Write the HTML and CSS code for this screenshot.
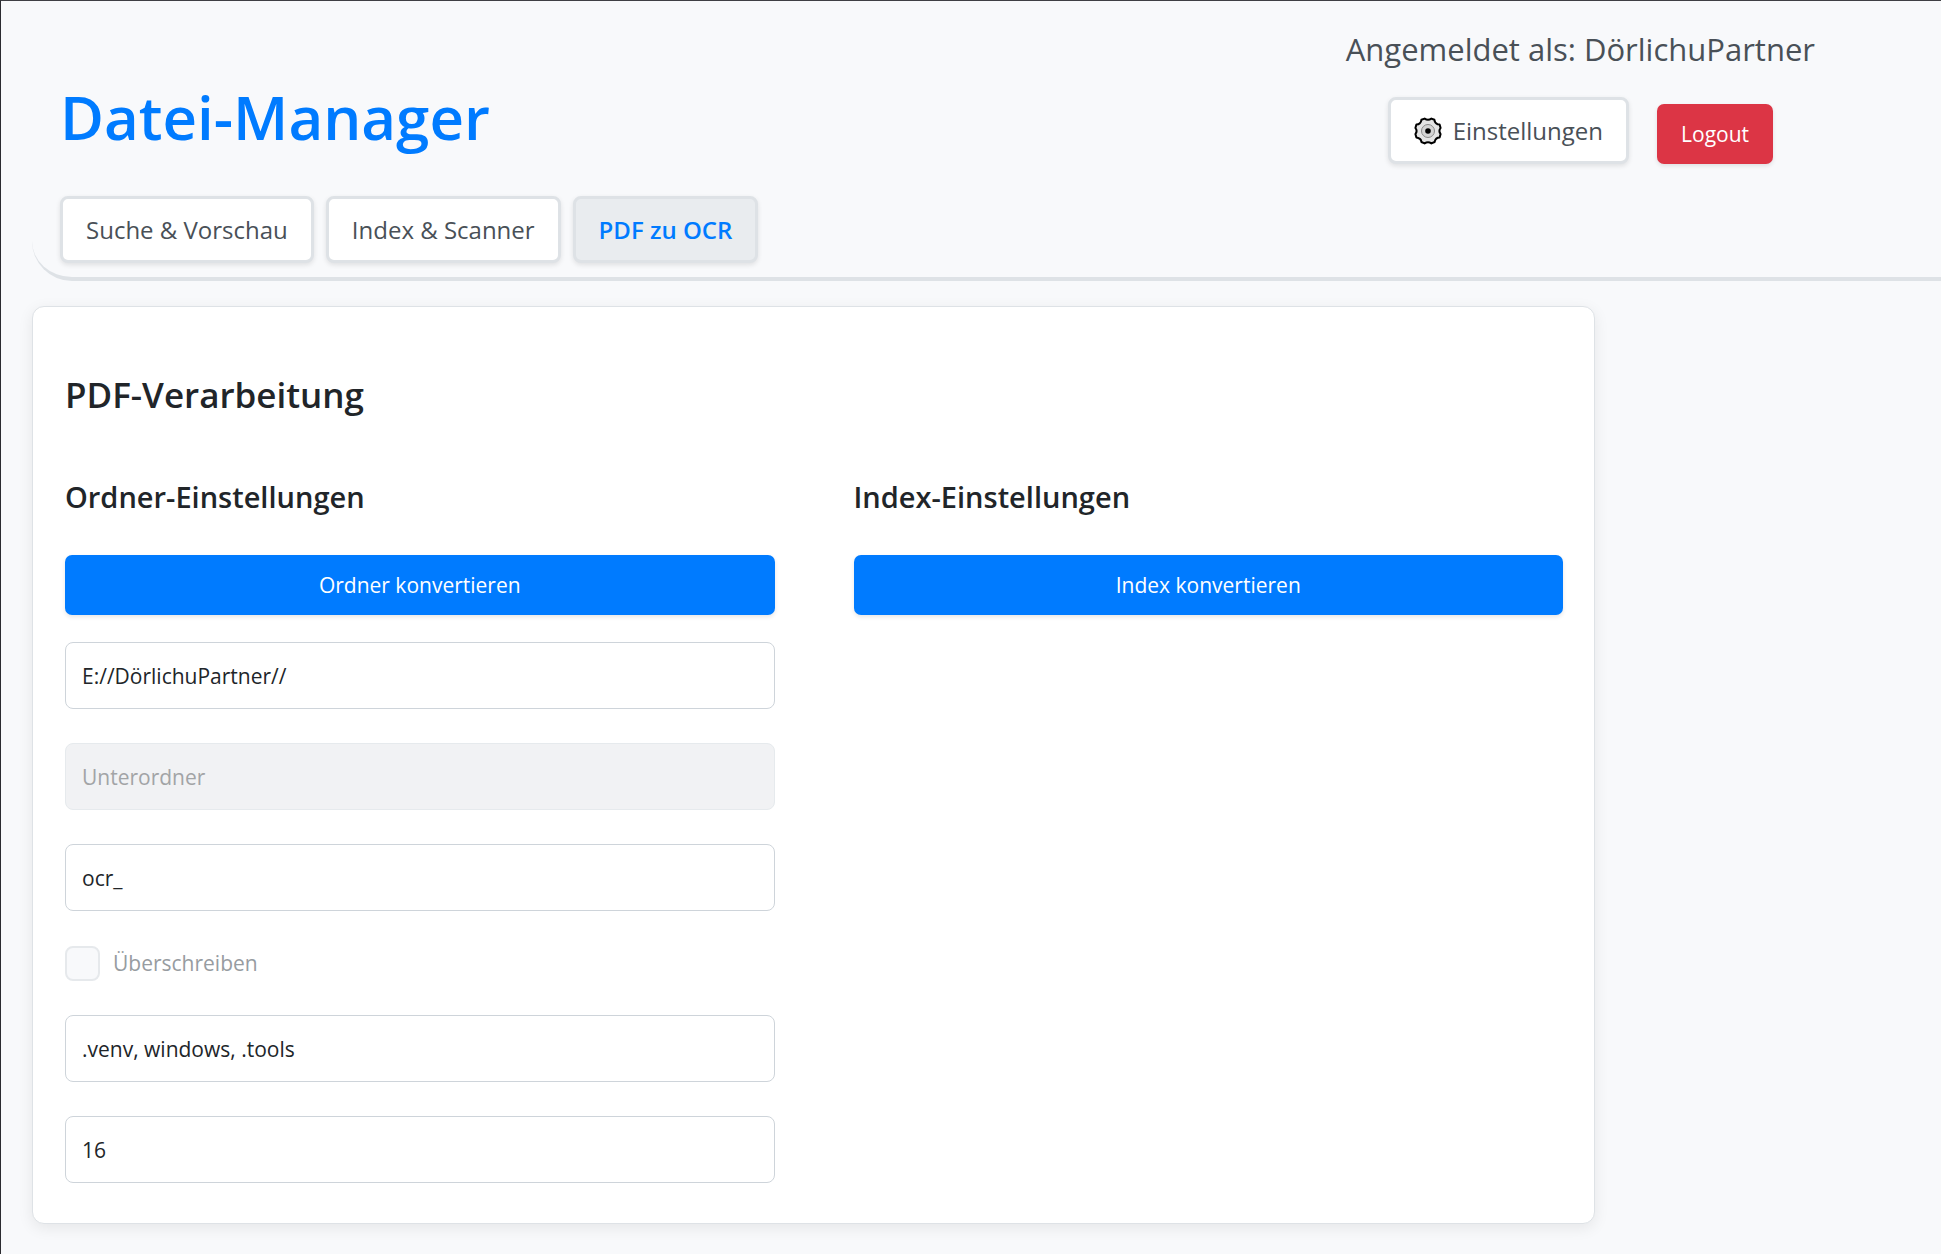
FILE: index.html
```
<!DOCTYPE html>
<html lang="de">
<head>
<meta charset="utf-8">
<meta name="viewport" content="width=device-width, initial-scale=1">
<title>Datei-Manager</title>
<link rel="stylesheet" href="styles.css">
</head>
<body>
<header class="header">
  <div class="brand">
    <h1 class="title">Datei-Manager</h1>
    <nav class="tabs">
      <button class="tab" type="button">Suche &amp; Vorschau</button>
      <button class="tab" type="button">Index &amp; Scanner</button>
      <button class="tab tab-active" type="button">PDF zu OCR</button>
    </nav>
  </div>
  <div class="user">
    <p class="user-name">Angemeldet als: DörlichuPartner</p>
    <div class="user-actions">
      <button class="tab settings" type="button">
        <svg class="gear" viewBox="0 0 28 28" aria-hidden="true">
          <path d="M10.6 1.6Q14 4 17.4 1.6L20.4 2.8Q20.6 6.2 23.6 7.2L25.6 7.4L26.6 11Q24.2 14 26.6 17L25.6 20.6Q21.6 20.6 20.6 25L17.4 26.4Q14 24 10.6 26.4L7.4 25Q7.2 21.4 2.4 20.6L1.4 17Q3.8 14 1.4 11L2.4 7.4Q6.8 7.4 7.4 2.8Z" fill="#e4e4e4" stroke="#000" stroke-width="2" stroke-linejoin="round"/>
          <circle cx="14" cy="14" r="6.5" fill="#d4d4d4" stroke="#8a8a8a" stroke-width="1"/>
          <circle cx="14" cy="14" r="2.8" fill="#000"/>
        </svg>
        <span>Einstellungen</span>
      </button>
      <button class="button logout" type="button">Logout</button>
    </div>
  </div>
</header>
<main class="card">
  <h2 class="card-title">PDF-Verarbeitung</h2>
  <div class="columns">
    <section class="column">
      <h3 class="section-title">Ordner-Einstellungen</h3>
      <button class="button" type="button">Ordner konvertieren</button>
      <form class="fields">
        <input class="field" type="text" aria-label="Ordnerpfad" value="E://DörlichuPartner//">
        <input class="field" type="text" aria-label="Unterordner" placeholder="Unterordner" disabled>
        <input class="field" type="text" aria-label="Präfix" value="ocr_">
        <label class="check"><input class="check-box" type="checkbox" disabled><span>Überschreiben</span></label>
        <input class="field" type="text" aria-label="Ausgeschlossene Ordner" value=".venv, windows, .tools">
        <input class="field" type="text" aria-label="Anzahl Prozesse" value="16">
      </form>
    </section>
    <section class="column">
      <h3 class="section-title">Index-Einstellungen</h3>
      <button class="button" type="button">Index konvertieren</button>
    </section>
  </div>
</main>
</body>
</html>
```
FILE: styles.css
```
* {
  box-sizing: border-box;
}

body {
  margin: 0;
  min-height: 100vh;
  border-top: 1px solid #3f3f44;
  border-left: 1px solid #2b2b30;
  background: #f8f9fb;
  color: #212529;
  font-family: "Segoe UI", "Open Sans", "Noto Sans", sans-serif;
  font-size: 21px;
  line-height: 32px;
}

h1, h2, h3, p {
  margin: 0;
}

button, input {
  font: inherit;
}

.header {
  display: flex;
  justify-content: space-between;
  align-items: flex-start;
  margin-left: 31px;
  padding: 24px 126px 14px 28px;
  border-bottom: 4px solid #dee2e6;
  border-bottom-left-radius: 40px;
}

.title {
  margin: 50px 0 37px;
  color: #007bff;
  font-size: 60px;
  line-height: 84px;
  font-weight: 600;
}

.tabs {
  display: flex;
  gap: 12px;
}

.tab {
  padding: 14px 23px;
  border: 3px solid #dee2e6;
  border-radius: 8px;
  background: #fff;
  color: #495057;
  font-size: 24px;
  line-height: 33px;
  box-shadow: 0 2px 5px rgba(0, 0, 0, 0.1);
}

.tab-active {
  background: #e9ecef;
  color: #007bff;
  font-weight: 600;
}

.user {
  display: flex;
  flex-direction: column;
  align-items: center;
  gap: 24px;
}

.user-name {
  color: #495057;
  font-size: 31px;
  line-height: 48px;
}

.user-actions {
  display: flex;
  align-items: flex-end;
  gap: 28px;
}

.settings {
  display: flex;
  align-items: center;
  gap: 11px;
}

.gear {
  width: 28px;
  height: 28px;
}

.button {
  padding: 14px 24px;
  border: 0;
  border-radius: 7px;
  background: #007bff;
  color: #fff;
  box-shadow: 0 2px 4px rgba(0, 0, 0, 0.1);
}

.logout {
  background: #dc3545;
}

.card {
  width: 81%;
  max-width: 1563px;
  margin: 25px 0 30px 31px;
  padding: 56px 31px 40px 32px;
  border: 1px solid #dee2e6;
  border-radius: 12px;
  background: #fff;
  box-shadow: 0 4px 15px rgba(0, 0, 0, 0.08);
}

.card-title {
  font-size: 35px;
  line-height: 64px;
  font-weight: 600;
}

.columns {
  display: grid;
  grid-template-columns: 1fr 1fr;
  gap: 79px;
  margin-top: 48px;
}

.column {
  display: flex;
  flex-direction: column;
}

.section-title {
  margin-bottom: 36px;
  font-size: 29px;
  line-height: 44px;
  font-weight: 600;
}

.fields {
  display: flex;
  flex-direction: column;
  gap: 34px;
  margin-top: 27px;
}

.field {
  width: 100%;
  height: 67px;
  padding: 0 16px;
  border: 1px solid #ced4da;
  border-radius: 8px;
  background: #fff;
  color: #212529;
}

.field:disabled {
  border-color: #e6eaed;
  background: #f1f2f4;
}

.field::placeholder {
  color: #a2a4a6;
}

.check {
  display: flex;
  align-items: center;
  gap: 13px;
  height: 36px;
  color: #979ca1;
}

.check-box {
  appearance: none;
  width: 35px;
  height: 35px;
  margin: 0;
  border: 2px solid #e6e9ec;
  border-radius: 8px;
  background: #f8f9fb;
}
```
